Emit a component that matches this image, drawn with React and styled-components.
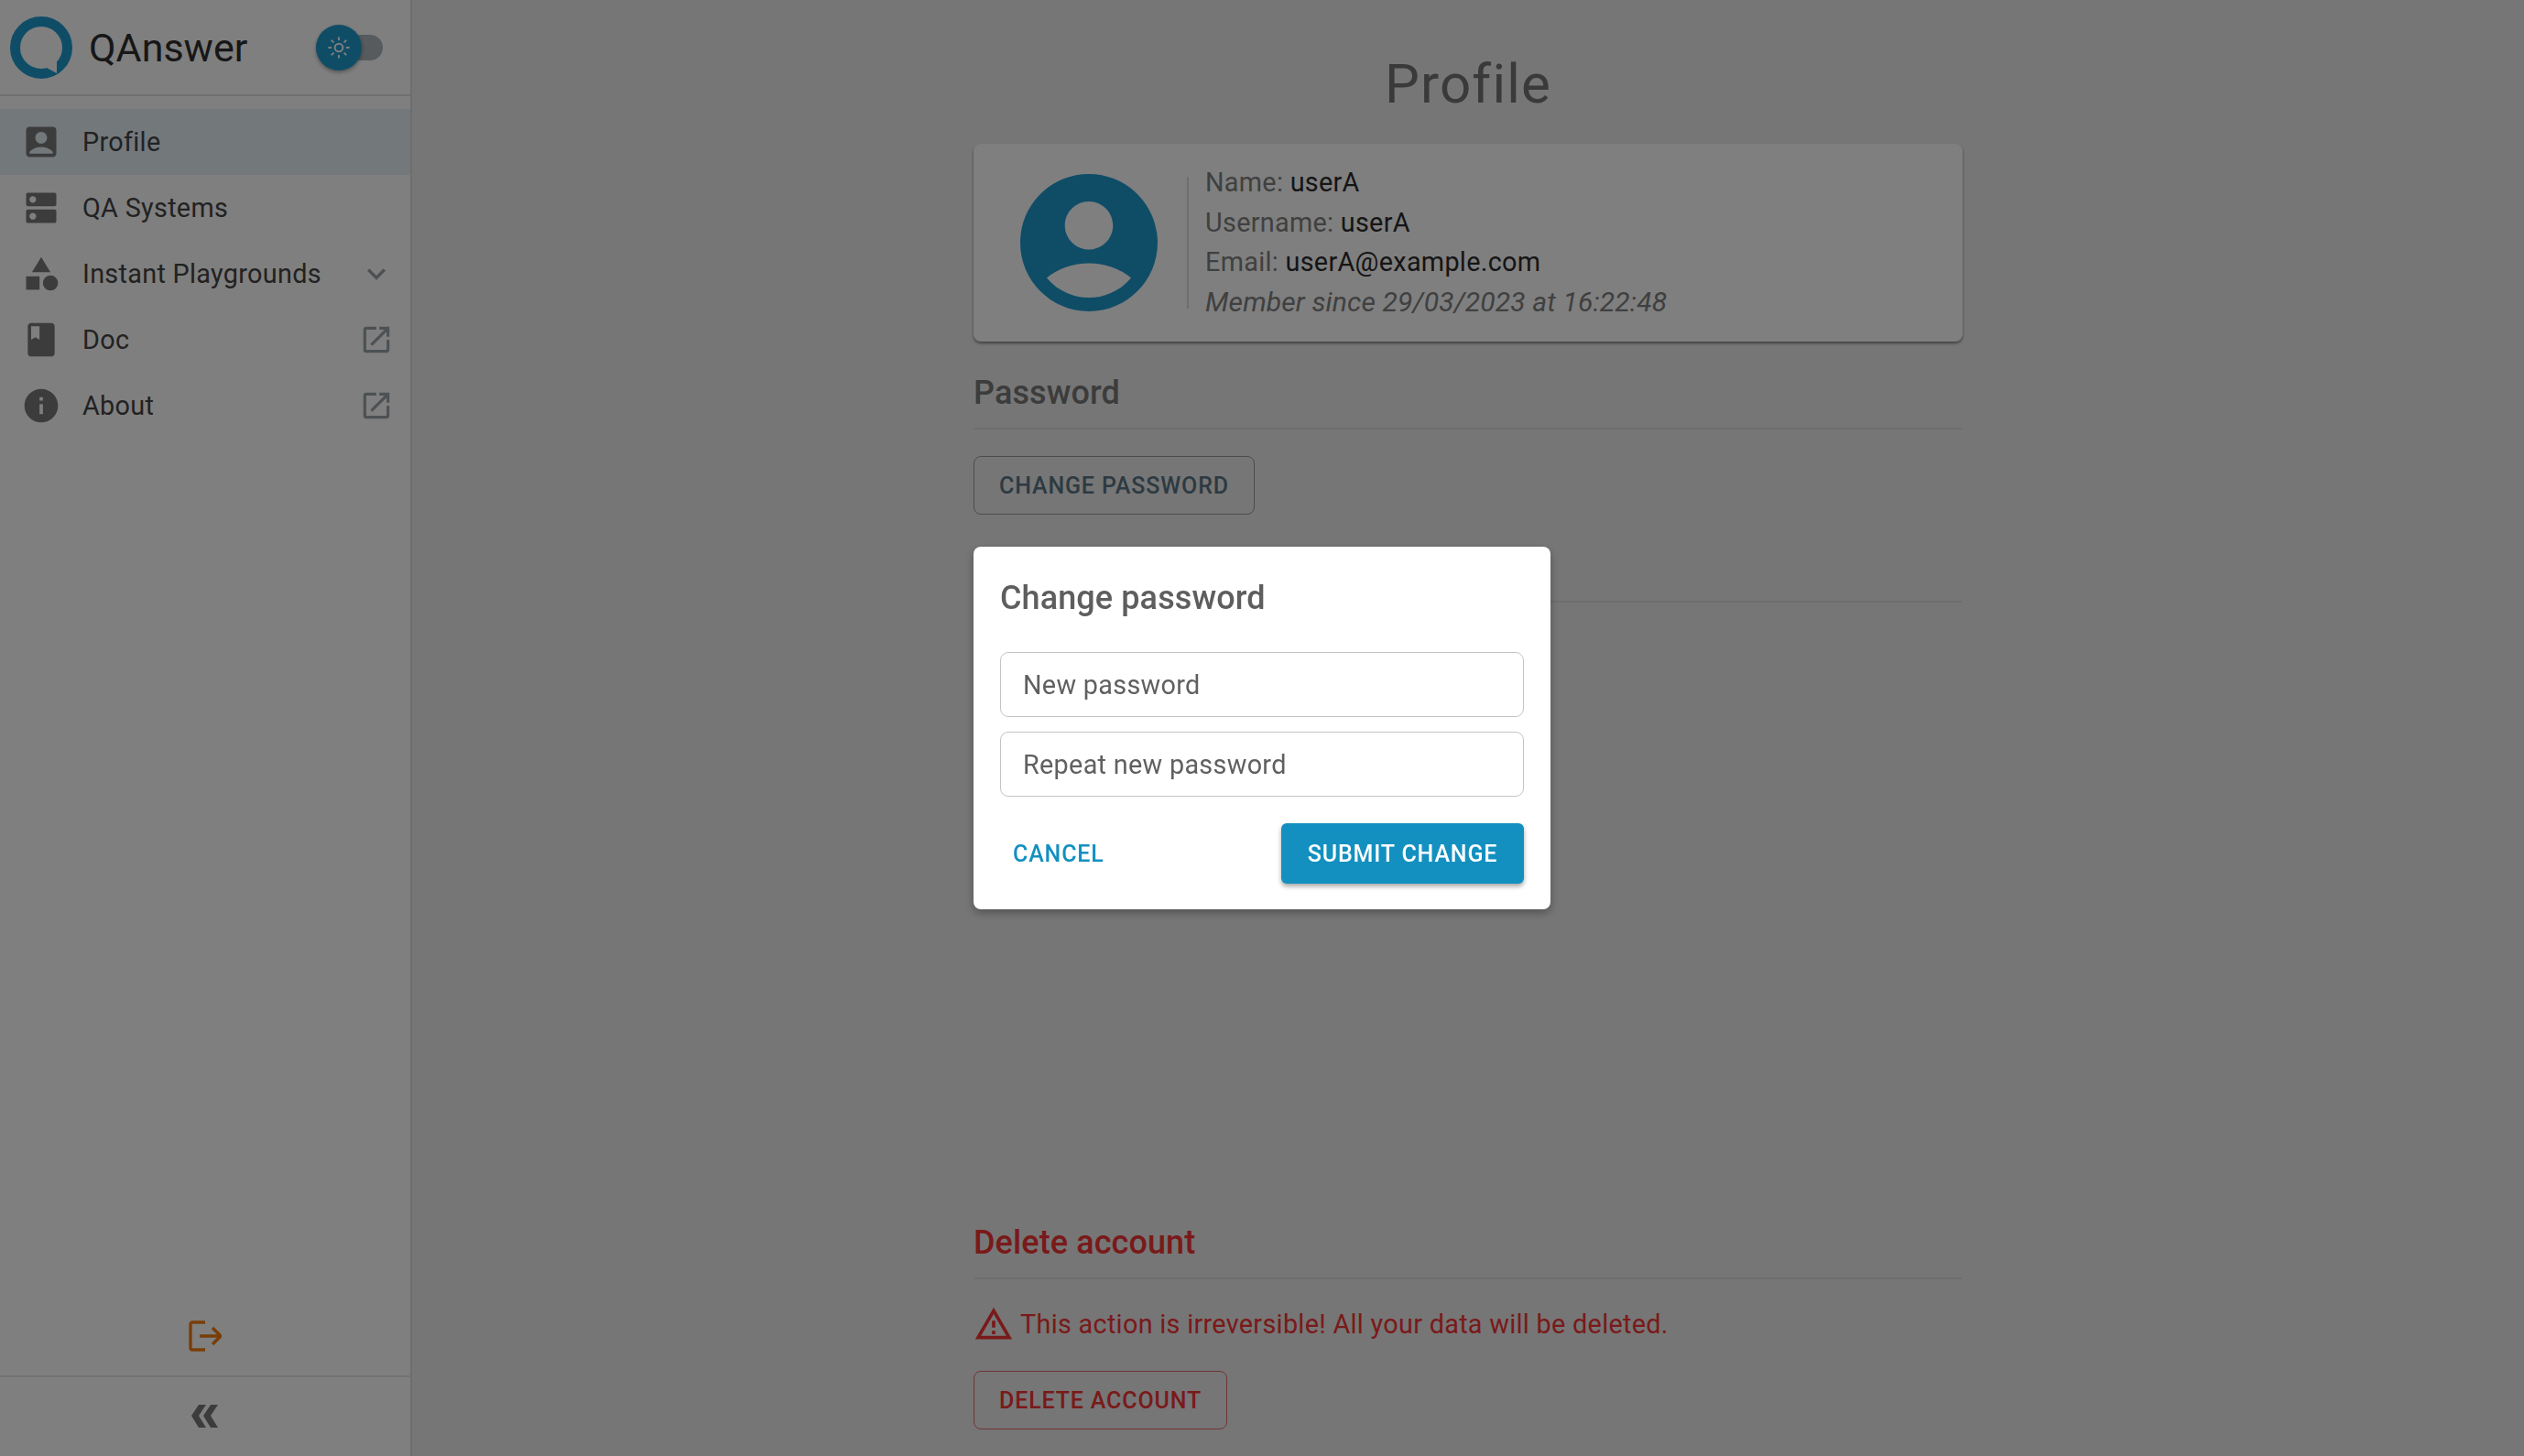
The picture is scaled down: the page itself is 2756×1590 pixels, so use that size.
import React from 'react';
import styled, { createGlobalStyle } from 'styled-components';
import {
  MdAccountBox,
  MdAccountCircle,
  MdBook,
  MdCategory,
  MdDns,
  MdExpandMore,
  MdInfo,
  MdOpenInNew,
  MdOutlineWarningAmber,
} from 'react-icons/md';
import { Sun } from 'lucide-react';

const GlobalStyle = createGlobalStyle`
  html, body {
    margin: 0;
    height: 100%;
    overflow: hidden;
  }
  body {
    font-family: Roboto, "Liberation Sans", sans-serif;
    background: #ececec;
  }
  * {
    box-sizing: border-box;
  }
`;

const Page = styled.div`
  display: flex;
  height: 100vh;
  overflow: hidden;
`;

const Sidebar = styled.aside`
  width: 450px;
  flex-shrink: 0;
  display: flex;
  flex-direction: column;
  background: #fff;
  border-right: 2px solid #dcdcdc;
`;

const SidebarHeader = styled.div`
  height: 105px;
  display: flex;
  align-items: center;
  padding: 0 30px 0 11px;
  border-bottom: 2px solid #dedede;
`;

const BrandName = styled.span`
  margin-left: 18px;
  font-size: 43px;
  color: #2e2e2e;
`;

const ThemeSwitch = styled.div`
  position: relative;
  width: 73px;
  height: 28px;
  margin-left: auto;
  border-radius: 14px;
  background: #aeb6bc;
`;

const SwitchThumb = styled.div`
  position: absolute;
  left: 0;
  top: -11px;
  width: 50px;
  height: 50px;
  border-radius: 50%;
  background: #1f9bcf;
  color: #fff;
  display: flex;
  align-items: center;
  justify-content: center;
  box-shadow: 0 2px 4px rgba(0, 0, 0, 0.35);
`;

const NavList = styled.nav`
  flex: 1;
  padding-top: 14px;
`;

const NavItem = styled.div`
  height: 72px;
  display: flex;
  align-items: center;
  padding: 0 15px 0 23px;
  background: ${(p) => (p.$active ? '#e6f0f6' : 'transparent')};
  color: #444;
  font-size: 28.8px;
  letter-spacing: 0.3px;
`;

const NavIcon = styled.span`
  width: 44px;
  height: 44px;
  display: flex;
  align-items: center;
  justify-content: center;
  color: #787878;
  margin-right: 23px;
`;

const NavLabel = styled.span`
  flex: 1;
`;

const NavAction = styled.span`
  width: 44px;
  display: flex;
  justify-content: center;
  color: #9aa2a8;
`;

const LogoutArea = styled.div`
  height: 90px;
  display: flex;
  align-items: center;
  justify-content: center;
  padding-top: 2px;
  border-bottom: 2px solid #e4e4e4;
`;

const CollapseArea = styled.div`
  height: 86px;
  display: flex;
  align-items: center;
  justify-content: center;
`;

const Main = styled.main`
  flex: 1;
  display: flex;
  flex-direction: column;
  align-items: center;
`;

const Content = styled.div`
  width: 1080px;
  display: flex;
  flex-direction: column;
`;

const PageTitle = styled.h1`
  margin: 0;
  height: 157px;
  padding-top: 54px;
  font-size: 60px;
  line-height: 76px;
  font-weight: 400;
  text-align: center;
  color: #747474;
  letter-spacing: 1.2px;
`;

const ProfileCard = styled.section`
  height: 216px;
  display: flex;
  align-items: center;
  padding-left: 51px;
  background: #fff;
  border-radius: 8px;
  box-shadow: 0 2px 3px rgba(0, 0, 0, 0.45);
`;

const Avatar = styled.div`
  display: flex;
  color: #1f9bcf;
  margin-right: 32px;
`;

const CardInfo = styled.div`
  height: 144px;
  border-left: 2px solid #dcdcdc;
  padding-left: 18px;
  display: flex;
  flex-direction: column;
  justify-content: center;
`;

const InfoLine = styled.div`
  flex: none;
  height: 43.4px;
  line-height: 43.4px;
  font-size: ${(p) => (p.$italic ? '30px' : '28.8px')};
  letter-spacing: ${(p) => (p.$italic ? '0.15px' : '0.3px')};
  color: #808080;
  font-style: ${(p) => (p.$italic ? 'italic' : 'normal')};

  b {
    font-weight: 400;
    color: #2a2a2a;
  }
`;

const Section = styled.section`
  margin-top: 30px;
`;

const SectionHead = styled.h2`
  margin: 0;
  height: 66px;
  line-height: 52px;
  font-size: 36px;
  font-weight: 500;
  letter-spacing: 0.1px;
  color: ${(p) => (p.$danger ? '#f23434' : '#787878')};
  border-bottom: 2px solid #dcdcdc;
`;

const OutlineButton = styled.button`
  display: block;
  height: 64px;
  padding: 0 27px;
  background: transparent;
  border: 1px solid ${(p) => (p.$danger ? '#e06a6a' : '#999')};
  border-radius: 8px;
  font-family: inherit;
  font-size: 25px;
  font-weight: 500;
  letter-spacing: 0.85px;
  color: ${(p) => (p.$danger ? '#f23434' : '#5a7484')};
`;

const SectionBody = styled.div`
  padding-top: ${(p) => (p.$tight ? '27px' : '29px')};
`;

const HiddenBody = styled.div`
  height: 643px;
`;

const WarningRow = styled.div`
  display: flex;
  align-items: center;
  height: 44px;
  margin-bottom: 29px;
  gap: 7px;
  color: #f23434;
  font-size: 28.8px;
  letter-spacing: 0.3px;
`;

const Overlay = styled.div`
  position: fixed;
  inset: 0;
  display: flex;
  align-items: center;
  justify-content: center;
  background: rgba(0, 0, 0, 0.5);
`;

const Dialog = styled.div`
  width: 630px;
  height: 396px;
  padding: 0 29px;
  display: flex;
  flex-direction: column;
  background: #fff;
  border-radius: 8px;
  box-shadow: 0 4px 10px rgba(0, 0, 0, 0.3);
`;

const DialogTitle = styled.h2`
  margin: 0;
  height: 115px;
  padding-top: 34px;
  line-height: 44px;
  font-size: 36px;
  font-weight: 500;
  letter-spacing: 0.1px;
  color: #5e5e5e;
`;

const PasswordInput = styled.input`
  display: block;
  width: 100%;
  height: 71px;
  margin-bottom: 16px;
  padding: 0 24px;
  border: 1px solid #c4c4c4;
  border-radius: 9px;
  outline: none;
  font-family: inherit;
  font-size: 28.8px;
  letter-spacing: 0.3px;

  &::placeholder {
    color: #606060;
    opacity: 1;
  }
`;

const DialogActions = styled.div`
  display: flex;
  align-items: center;
  justify-content: space-between;
  margin-top: 13px;
`;

const TextButton = styled.button`
  height: 66px;
  padding: 0 14px;
  border: none;
  background: none;
  font-family: inherit;
  font-size: 25px;
  font-weight: 500;
  letter-spacing: 0.85px;
  color: #1390c0;
`;

const PrimaryButton = styled.button`
  height: 66px;
  width: 265px;
  border: none;
  border-radius: 6px;
  background: #1390c0;
  color: #fff;
  font-family: inherit;
  font-size: 25px;
  font-weight: 500;
  letter-spacing: 0.85px;
  box-shadow: 0 3px 5px rgba(0, 0, 0, 0.35);
`;

function Logo() {
  return (
    <svg width="68" height="68" viewBox="0 0 68 68">
      <circle cx="34" cy="34" r="28.5" fill="none" stroke="#1f9bcf" strokeWidth="11" />
      <polygon points="38,55 51,62 51,47" fill="#fff" />
    </svg>
  );
}

function LogoutIcon() {
  return (
    <svg width="36" height="34" viewBox="0 0 36 34" fill="none" stroke="#f07c10" strokeWidth="3.4">
      <path d="M18 2H4a2 2 0 0 0-2 2v26a2 2 0 0 0 2 2h14" />
      <path d="M12 17h22M26 8l9 9-9 9" />
    </svg>
  );
}

function CollapseIcon() {
  return (
    <svg width="30" height="26" viewBox="0 0 30 26" fill="#787878">
      <polygon points="0,12 8,0 16,0 8,12 16,25 8,25" />
      <polygon points="13,12 21,0 29,0 21,12 29,25 21,25" />
    </svg>
  );
}

const navItems = [
  { label: 'Profile', icon: <MdAccountBox size={44} />, active: true },
  { label: 'QA Systems', icon: <MdDns size={44} /> },
  { label: 'Instant Playgrounds', icon: <MdCategory size={44} />, action: <MdExpandMore size={40} /> },
  { label: 'Doc', icon: <MdBook size={44} />, action: <MdOpenInNew size={38} /> },
  { label: 'About', icon: <MdInfo size={44} />, action: <MdOpenInNew size={38} /> },
];

export default function App() {
  return (
    <>
      <GlobalStyle />
      <Page>
        <Sidebar>
          <SidebarHeader>
            <Logo />
            <BrandName>QAnswer</BrandName>
            <ThemeSwitch>
              <SwitchThumb>
                <Sun size={26} strokeWidth={1.8} />
              </SwitchThumb>
            </ThemeSwitch>
          </SidebarHeader>
          <NavList>
            {navItems.map((item) => (
              <NavItem key={item.label} $active={item.active}>
                <NavIcon>{item.icon}</NavIcon>
                <NavLabel>{item.label}</NavLabel>
                {item.action && <NavAction>{item.action}</NavAction>}
              </NavItem>
            ))}
          </NavList>
          <LogoutArea>
            <LogoutIcon />
          </LogoutArea>
          <CollapseArea>
            <CollapseIcon />
          </CollapseArea>
        </Sidebar>
        <Main>
          <Content>
            <PageTitle>Profile</PageTitle>
            <ProfileCard>
              <Avatar>
                <MdAccountCircle size={180} style={{ margin: '-15px' }} />
              </Avatar>
              <CardInfo>
                <InfoLine>Name: <b>userA</b></InfoLine>
                <InfoLine>Username: <b>userA</b></InfoLine>
                <InfoLine>Email: <b>userA@example.com</b></InfoLine>
                <InfoLine $italic>Member since 29/03/2023 at 16:22:48</InfoLine>
              </CardInfo>
            </ProfileCard>
            <Section>
              <SectionHead>Password</SectionHead>
              <SectionBody>
                <OutlineButton>CHANGE PASSWORD</OutlineButton>
              </SectionBody>
            </Section>
            <Section>
              <SectionHead />
              <HiddenBody />
            </Section>
            <Section>
              <SectionHead $danger>Delete account</SectionHead>
              <SectionBody $tight>
                <WarningRow>
                  <MdOutlineWarningAmber size={44} />
                  This action is irreversible! All your data will be deleted.
                </WarningRow>
                <OutlineButton $danger>DELETE ACCOUNT</OutlineButton>
              </SectionBody>
            </Section>
          </Content>
        </Main>
      </Page>
      <Overlay>
        <Dialog>
          <DialogTitle>Change password</DialogTitle>
          <PasswordInput type="password" placeholder="New password" />
          <PasswordInput type="password" placeholder="Repeat new password" />
          <DialogActions>
            <TextButton>CANCEL</TextButton>
            <PrimaryButton>SUBMIT CHANGE</PrimaryButton>
          </DialogActions>
        </Dialog>
      </Overlay>
    </>
  );
}
